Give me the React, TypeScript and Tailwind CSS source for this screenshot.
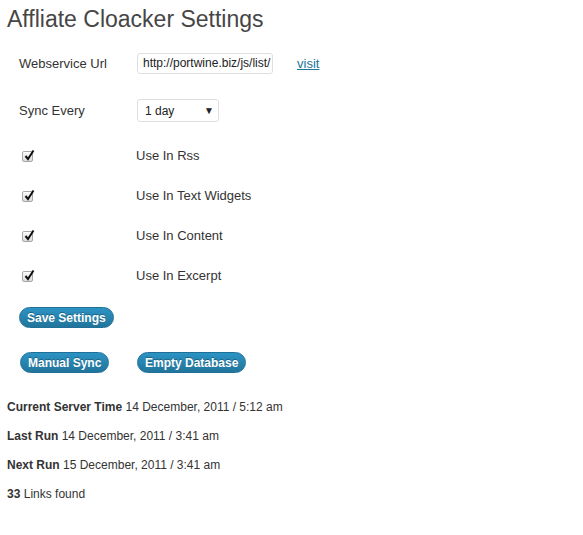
import { ReactNode } from 'react';

// Settings page of a small WordPress plugin (old admin look)

function CheckMark() {
  return (
    <div className="relative w-[11px] h-[11px] rounded-[2px] border border-[#a8a8a8] bg-gradient-to-b from-[#fdfdfd] to-[#dcdcdc]">
      <svg
        className="absolute left-[1px] top-[-3px]"
        width="11"
        height="12"
        viewBox="0 0 11 12"
      >
        <path d="M1.5 7 L4 10 L9.5 1.5" stroke="#111" strokeWidth="2" fill="none" />
      </svg>
    </div>
  );
}

function BlueButton({ children }: { children: ReactNode }) {
  return (
    <button className="block h-[21px] px-[7px] rounded-[11px] border border-[#1f6f96] bg-gradient-to-b from-[#2c93c4] to-[#21759b] text-white text-[12px] font-bold leading-none [text-shadow:0_-1px_0_rgba(0,0,0,0.3)]">
      {children}
    </button>
  );
}

function CheckRow({ label }: { label: string }) {
  return (
    <div className="flex items-center h-[20px]">
      <div className="w-[117px] pl-[3px]">
        <CheckMark />
      </div>
      <span className="text-[13px]">{label}</span>
    </div>
  );
}

function InfoLine({ title, value }: { title: string; value: string }) {
  return (
    <div className="h-[29px] flex items-center text-[12px]">
      <span className="font-bold">{title}</span>
      <span>&nbsp;{value}</span>
    </div>
  );
}

export default function App() {
  return (
    <div className="w-[583px] h-[535px] bg-white text-[#333] font-['Liberation_Sans',Arial,sans-serif]">
      <h2 className="pl-[7px] pt-[5px] text-[23px] leading-[29px] text-[#464646]">
        Affliate Cloacker Settings
      </h2>

      <div className="pl-[19px] pt-[19px]">
        <div className="flex items-center h-[21px]">
          <span className="w-[118px] text-[13px]">Webservice Url</span>
          <div className="w-[136px] h-[21px] border border-[#dfdfdf] rounded-[3px] pl-[5px] overflow-hidden text-[12px] leading-[19px] text-[#222] whitespace-nowrap">
            http://portwine.biz/js/list/
          </div>
          <a href="#" className="ml-[24px] text-[13px] text-[#21759b] underline">
            visit
          </a>
        </div>

        <div className="flex items-center h-[23px] mt-[25px]">
          <span className="w-[118px] text-[13px]">Sync Every</span>
          <div className="w-[82px] h-[23px] border border-[#dfdfdf] rounded-[3px] pl-[7px] pr-[4px] flex items-center justify-between text-[12px] text-[#222]">
            <span>1 day</span>
            <span className="text-[10px]">▼</span>
          </div>
        </div>

        <div className="flex flex-col gap-[20px] mt-[24px]">
          <CheckRow label="Use In Rss" />
          <CheckRow label="Use In Text Widgets" />
          <CheckRow label="Use In Content" />
          <CheckRow label="Use In Excerpt" />
        </div>

        <div className="flex mt-[21px]">
          <BlueButton>Save Settings</BlueButton>
        </div>

        <div className="flex items-center mt-[24px]">
          <div className="w-[118px] pl-[1px]">
            <BlueButton>Manual Sync</BlueButton>
          </div>
          <BlueButton>Empty Database</BlueButton>
        </div>
      </div>

      <div className="pl-[7px] pt-[19px] flex flex-col">
        <InfoLine title="Current Server Time" value="14 December, 2011 / 5:12 am" />
        <InfoLine title="Last Run" value="14 December, 2011 / 3:41 am" />
        <InfoLine title="Next Run" value="15 December, 2011 / 3:41 am" />
        <InfoLine title="33" value="Links found" />
      </div>
    </div>
  );
}
